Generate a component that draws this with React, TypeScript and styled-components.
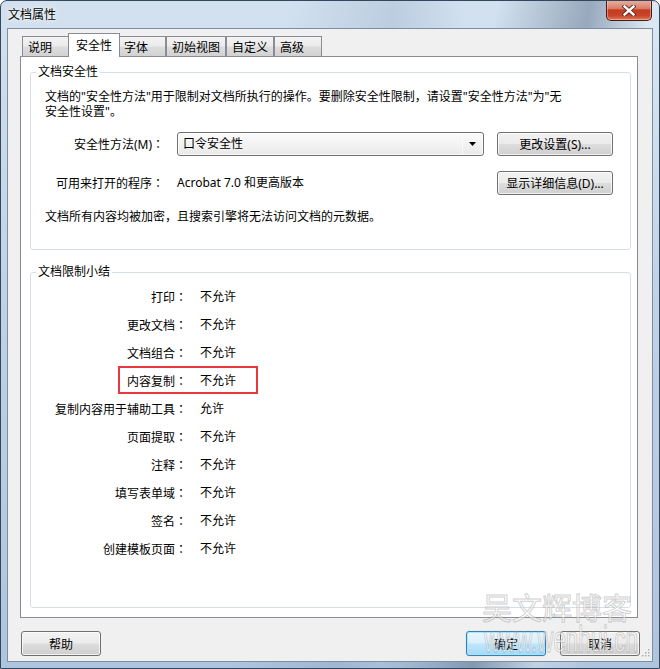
import React from 'react';
import styled, { createGlobalStyle, css } from 'styled-components';

const FONT = `"Noto Sans", "Noto Sans CJK SC", sans-serif`;

const GlobalStyle = createGlobalStyle`
  html, body { margin: 0; padding: 0; background: #ffffff; overflow: hidden; }
  body { font-family: ${FONT}; font-size: 12px; color: #000; }
  *, *::before, *::after { box-sizing: border-box; }
`;

const Window = styled.div`
  position: relative;
  width: 660px;
  height: 669px;
  display: flex;
  flex-direction: column;
  padding: 0 6px 6px;
  border: 1px solid #34475c;
  border-radius: 7px 7px 0 0;
  overflow: hidden;
  background:
    linear-gradient(100deg, transparent 0%, transparent 64%, rgba(70, 92, 120, 0.42) 76%, rgba(255, 255, 255, 0.22) 84%, transparent 91%),
    linear-gradient(95deg, transparent 0%, transparent 40%, rgba(90, 120, 160, 0.18) 55%, transparent 65%),
    linear-gradient(180deg, #d3e1ef 0%, #bfd2e6 45%, #afc5dd 100%);
`;

const TitleBar = styled.div`
  height: 27px;
  display: flex;
  align-items: flex-start;
  justify-content: space-between;
`;

const Title = styled.div`
  padding-left: 1px;
  line-height: 27px;
  font-size: 12px;
  color: #000;
  text-shadow: 0 0 6px rgba(255, 255, 255, 0.95), 0 0 2px rgba(255, 255, 255, 0.9);
`;

const CloseButton = styled.div`
  width: 46px;
  height: 21px;
  margin-top: -1px;
  margin-right: 1px;
  border: 1px solid #4a1a12;
  border-top: none;
  border-radius: 0 0 5px 5px;
  background: linear-gradient(180deg, #eab1a3 0%, #d9806b 42%, #c43b1f 50%, #c9452a 78%, #df7a5a 100%);
  box-shadow: inset 0 0 0 1px rgba(255, 220, 210, 0.45);
  display: flex;
  align-items: center;
  justify-content: center;
`;

const Client = styled.div`
  position: relative;
  flex: 1;
  display: flex;
  flex-direction: column;
  overflow: hidden;
  border: 1px solid #7b8ea4;
  background: #f0f0f0;
  padding: 4px 14px 5px 12px;
`;

const TabStrip = styled.div`
  position: relative;
  z-index: 1;
  display: flex;
  align-items: flex-end;
  height: 24px;
  margin: 0 0 -1px 2px;
`;

const Tab = styled.div<{ $active?: boolean }>`
  display: flex;
  align-items: center;
  min-width: 48px;
  font-size: 12px;
  border: 1px solid #898c95;
  border-bottom: none;
  ${(p) =>
    p.$active
      ? css`
          position: relative;
          z-index: 2;
          height: 24px;
          margin: 0 -2px;
          padding: 0 7px 2px;
          background: #ffffff;
        `
      : css`
          height: 20px;
          margin-bottom: 1px;
          padding: 0 5px;
          background: linear-gradient(180deg, #f3f3f3 0%, #ebebeb 48%, #dddddd 52%, #d2d2d2 100%);
        `}
`;

const TabPanel = styled.div`
  flex: 1;
  min-height: 0;
  display: flex;
  flex-direction: column;
  gap: 14px;
  background: #ffffff;
  border: 1px solid #898c95;
  padding: 7px 6px 9px 9px;
`;

const Group = styled.fieldset<{ $grow?: boolean; $tight?: boolean }>`
  margin: 0;
  min-width: 0;
  border: 1px solid #d5dfe5;
  border-radius: 3px;
  padding: ${(p) => (p.$tight ? '3px 16px 0 14px' : '9px 16px 25px 14px')};
  ${(p) => p.$grow && css`flex: 1;`}
`;

const Legend = styled.legend`
  padding: 0 2px;
  margin-left: -9px;
  font-size: 12px;
  line-height: 16px;
`;

const Paragraph = styled.p<{ $gap?: number }>`
  margin: ${(p) => p.$gap ?? 0}px 0 0;
  font-size: 12px;
  line-height: 15px;
`;

const SettingsGrid = styled.div`
  display: grid;
  grid-template-columns: 119px 307px 116px;
  column-gap: 13px;
  row-gap: 15px;
  align-items: center;
  margin-top: 13px;
`;

const FieldLabel = styled.div`
  text-align: right;
  white-space: nowrap;
  line-height: 16px;
`;

const Colon = styled.span`
  font-family: "Noto Sans CJK JP", "Noto Sans CJK SC", sans-serif;
`;

const FieldValue = styled.div`
  white-space: nowrap;
  line-height: 16px;
`;

const Select = styled.div`
  display: flex;
  align-items: center;
  height: 24px;
  border: 1px solid #707070;
  border-radius: 3px;
  background: linear-gradient(180deg, #fbfbfb 0%, #f3f3f3 50%, #e9e9e9 100%);
  box-shadow: inset 0 0 0 1px rgba(255, 255, 255, 0.8);
`;

const SelectText = styled.span`
  flex: 1;
  padding-left: 5px;
  line-height: 16px;
`;

const DropArrow = styled.span`
  width: 21px;
  height: 100%;
  display: flex;
  align-items: center;
  justify-content: center;
  border-left: 1px solid rgba(255, 255, 255, 0.6);
`;

const Button = styled.button<{ $primary?: boolean; $width?: number }>`
  height: 25px;
  ${(p) => p.$width && css`width: ${p.$width}px;`}
  padding: 0;
  font-family: ${FONT};
  font-size: 12px;
  color: #000;
  border-radius: 3px;
  border: 1px solid #707070;
  background: linear-gradient(180deg, #f2f2f2 0%, #ebebeb 48%, #dddddd 52%, #cfcfcf 100%);
  box-shadow: inset 0 0 0 1px rgba(255, 255, 255, 0.75);
  ${(p) =>
    p.$primary &&
    css`
      border-color: #3c7fb1;
      background: linear-gradient(180deg, #eaf6fd 0%, #d9f0fc 48%, #bee6fd 52%, #a7d9f5 100%);
      box-shadow: inset 0 0 0 1px rgba(160, 230, 255, 0.9), 0 0 1px rgba(60, 180, 240, 0.6);
    `}
`;

const GridButton = styled(Button)`
  height: 24px;
`;

const SummaryRow = styled.div<{ $highlight?: boolean }>`
  position: relative;
  display: grid;
  grid-template-columns: 142px auto;
  column-gap: 13px;
  align-items: center;
  height: 28px;
  ${(p) =>
    p.$highlight &&
    css`
      &::after {
        content: '';
        position: absolute;
        left: 73px;
        top: -1px;
        width: 140px;
        height: 28px;
        border: 2px solid #e8383d;
      }
    `}
`;

const Footer = styled.div`
  display: flex;
  align-items: stretch;
  gap: 14px;
  height: 25px;
  margin: 13px -2px 0 1px;
`;

const Spacer = styled.div`
  flex: 1;
`;

const Watermark = styled.div`
  position: absolute;
  left: 474px;
  top: 560px;
  width: 170px;
  pointer-events: none;
  display: flex;
  flex-direction: column;
`;

const WatermarkTitle = styled.div`
  font-family: "Noto Sans CJK SC", sans-serif;
  font-size: 30px;
  line-height: 34px;
  color: rgba(255, 255, 255, 0.55);
  -webkit-text-stroke: 1px rgba(150, 150, 150, 0.45);
`;

const WatermarkUrl = styled.div`
  font-family: "Liberation Sans", Arial, sans-serif;
  font-size: 36px;
  line-height: 34px;
  margin-left: 2px;
  white-space: nowrap;
  transform: scaleX(0.62);
  transform-origin: left center;
  color: rgba(255, 255, 255, 0.5);
  -webkit-text-stroke: 1px rgba(150, 150, 150, 0.5);
`;

const Grip = styled.svg`
  position: absolute;
  right: 2px;
  bottom: 4px;
`;

const tabs = ['说明', '安全性', '字体', '初始视图', '自定义', '高级'];

const summary: { label: string; value: string; highlight?: boolean }[] = [
  { label: '打印', value: '不允许' },
  { label: '更改文档', value: '不允许' },
  { label: '文档组合', value: '不允许' },
  { label: '内容复制', value: '不允许', highlight: true },
  { label: '复制内容用于辅助工具', value: '允许' },
  { label: '页面提取', value: '不允许' },
  { label: '注释', value: '不允许' },
  { label: '填写表单域', value: '不允许' },
  { label: '签名', value: '不允许' },
  { label: '创建模板页面', value: '不允许' },
];

export default function App() {
  return (
    <>
      <GlobalStyle />
      <Window>
        <TitleBar>
          <Title>文档属性</Title>
          <CloseButton>
            <svg width="14" height="11" viewBox="0 0 14 11">
              <path d="M2.5 1.5 L11.5 9.5 M11.5 1.5 L2.5 9.5" stroke="#5a2418" strokeWidth="4.2" strokeLinecap="square" />
              <path d="M2.5 1.5 L11.5 9.5 M11.5 1.5 L2.5 9.5" stroke="#ffffff" strokeWidth="2.4" strokeLinecap="square" />
            </svg>
          </CloseButton>
        </TitleBar>
        <Client>
          <TabStrip>
            {tabs.map((t) => (
              <Tab key={t} $active={t === '安全性'}>
                {t}
              </Tab>
            ))}
          </TabStrip>
          <TabPanel>
            <Group>
              <Legend>文档安全性</Legend>
              <Paragraph>
                文档的"安全性方法"用于限制对文档所执行的操作。要删除安全性限制，请设置"安全性方法"为"无
                <br />
                安全性设置"。
              </Paragraph>
              <SettingsGrid>
                <FieldLabel>
                  安全性方法(M)<Colon>：</Colon>
                </FieldLabel>
                <Select>
                  <SelectText>口令安全性</SelectText>
                  <DropArrow>
                    <svg width="8" height="5" viewBox="0 0 8 5">
                      <path d="M0 0 H7 L3.5 4 Z" fill="#000" />
                    </svg>
                  </DropArrow>
                </Select>
                <GridButton>更改设置(S)...</GridButton>
                <FieldLabel>
                  可用来打开的程序<Colon>：</Colon>
                </FieldLabel>
                <FieldValue>Acrobat 7.0 和更高版本</FieldValue>
                <GridButton>显示详细信息(D)...</GridButton>
              </SettingsGrid>
              <Paragraph $gap={14}>文档所有内容均被加密，且搜索引擎将无法访问文档的元数据。</Paragraph>
            </Group>
            <Group $grow $tight>
              <Legend>文档限制小结</Legend>
              {summary.map((r) => (
                <SummaryRow key={r.label} $highlight={r.highlight}>
                  <FieldLabel>
                    {r.label}
                    <Colon>：</Colon>
                  </FieldLabel>
                  <FieldValue>{r.value}</FieldValue>
                </SummaryRow>
              ))}
            </Group>
          </TabPanel>
          <Footer>
            <Button $width={80}>帮助</Button>
            <Spacer />
            <Button $primary $width={80}>确定</Button>
            <Button $width={80}>取消</Button>
          </Footer>
          <Watermark>
            <WatermarkTitle>吴文辉博客</WatermarkTitle>
            <WatermarkUrl>www.wenhui.cn</WatermarkUrl>
          </Watermark>
          <Grip width="9" height="9" viewBox="0 0 9 9">
            <rect x="7" y="1" width="1.4" height="1.4" fill="#a8a8a8" />
            <rect x="4" y="4" width="1.4" height="1.4" fill="#a8a8a8" />
            <rect x="7" y="4" width="1.4" height="1.4" fill="#a8a8a8" />
            <rect x="1" y="7" width="1.4" height="1.4" fill="#a8a8a8" />
            <rect x="4" y="7" width="1.4" height="1.4" fill="#a8a8a8" />
            <rect x="7" y="7" width="1.4" height="1.4" fill="#a8a8a8" />
          </Grip>
        </Client>
      </Window>
    </>
  );
}
